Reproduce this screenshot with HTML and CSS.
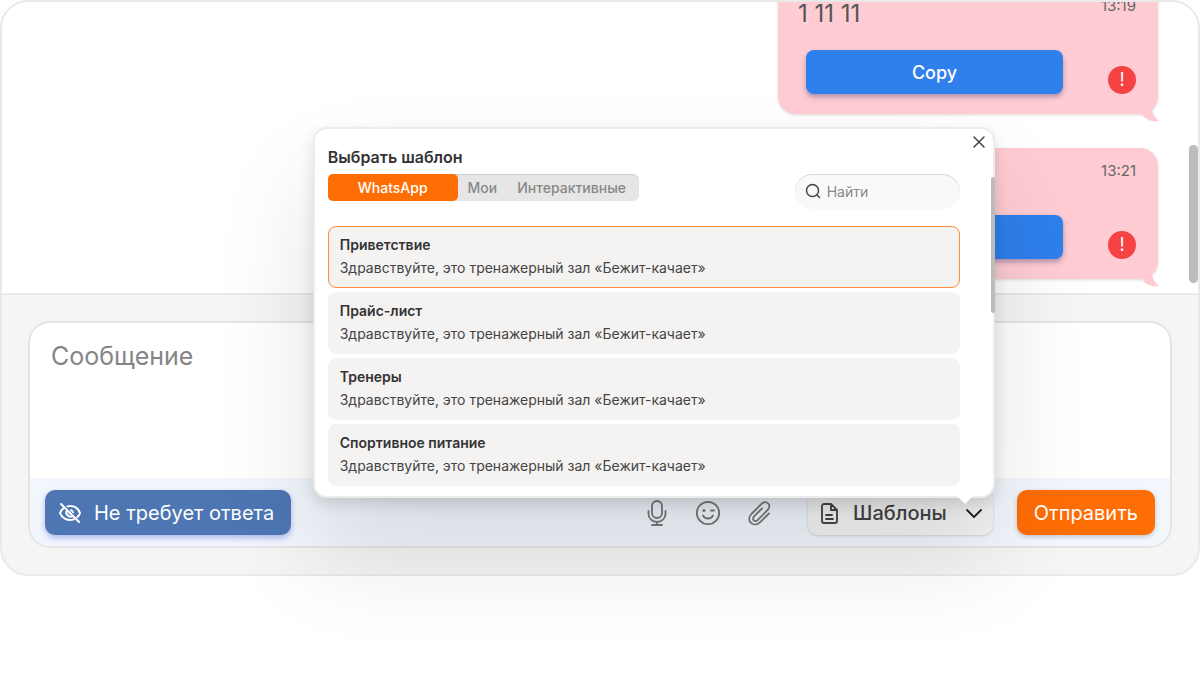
FILE: index.html
```html
<!DOCTYPE html>
<html lang="ru">
<head>
    <meta charset="UTF-8">
    <meta name="viewport" content="width=device-width, initial-scale=1.0">
    <title>Чат</title>
    <link rel="stylesheet" href="styles.css">
</head>
<body>
    <main class="chat">
        <section class="history">
            <article class="message">
                <div class="message-body">
                    <p>1 11 11</p>
                    <button class="copy-btn" type="button">Copy</button>
                </div>
                <div class="message-meta">
                    <time>13:19</time>
                    <span class="message-error">!</span>
                </div>
                <svg class="message-tail" viewBox="0 0 18 18"><path d="M10 0C11 8 13 13 18 17C11 18 4 16 0 9Z" fill="#ffccd3"/></svg>
            </article>
            <article class="message">
                <div class="message-body">
                    <p></p>
                    <button class="copy-btn" type="button">Copy</button>
                </div>
                <div class="message-meta">
                    <time>13:21</time>
                    <span class="message-error">!</span>
                </div>
                <svg class="message-tail" viewBox="0 0 18 18"><path d="M10 0C11 8 13 13 18 17C11 18 4 16 0 9Z" fill="#ffccd3"/></svg>
            </article>
            <div class="history-scroll"></div>
        </section>

        <form class="composer">
            <div class="composer-box">
                <textarea class="composer-input" placeholder="Сообщение" aria-label="Сообщение"></textarea>
                <div class="toolbar">
                    <button class="btn btn-blue" type="button">
                        <svg width="24" height="24" viewBox="0 0 24 24" fill="none" stroke="currentColor" stroke-width="2" stroke-linecap="round" stroke-linejoin="round">
                            <path d="M3 3l18 18"/>
                            <path d="M9.5 5.4C16 3.600 20.500 7.500 22 12c-.5 1.600-1.400 3-2.600 4.100"/>
                            <path d="M5.500 7.300C3.900 8.500 2.700 10.100 2 12c1.800 5 7.600 8.600 13.800 6.400"/>
                            <path d="M9 9.500a4 4 0 0 0 5.500 5.500"/>
                            <path d="M13 9.200a3 3 0 0 1 2 2"/>
                            <path d="M11.500 11.700l1 1"/>
                        </svg>
                        Не требует ответа
                    </button>

                    <div class="tools">
                        <button class="icon-btn" type="button" aria-label="Голосовое сообщение">
                            <svg width="26" height="26" viewBox="0 0 26 26" fill="none" stroke="currentColor" stroke-width="1.800" stroke-linecap="round">
                                <rect x="8" y="1" width="10" height="17" rx="5"/>
                                <path d="M4.500 11v3a8.500 8 0 0 0 17 0v-3M13 22v3M8 25h10"/>
                            </svg>
                        </button>
                        <button class="icon-btn" type="button" aria-label="Смайлы">
                            <svg width="26" height="26" viewBox="0 0 26 26" fill="none" stroke="currentColor" stroke-width="1.800" stroke-linecap="round">
                                <circle cx="13" cy="13" r="11.200"/>
                                <path d="M8 15.500c2 4 8 4 10 0M16 10.500h3"/>
                                <circle cx="9" cy="10.500" r="1.500" fill="currentColor" stroke="none"/>
                            </svg>
                        </button>
                        <button class="icon-btn" type="button" aria-label="Прикрепить файл">
                            <svg width="26" height="26" viewBox="0 0 26 26" fill="none" stroke="currentColor" stroke-width="1.800" stroke-linecap="round">
                                <path d="M23 13.500l-8.800 8.600C7.500 28.500-.8 20.500 5.400 14L15.200 4.200c5.200-5 11 .8 6.500 5.800l-9.800 9.800c-3.200 3-6.400-.4-3.800-3.400l8-8"/>
                            </svg>
                        </button>
                    </div>

                    <div class="templates">
                        <button class="btn btn-gray" type="button">
                            <svg width="24" height="24" viewBox="0 0 24 24" fill="none" stroke="currentColor" stroke-width="1.800" stroke-linecap="round" stroke-linejoin="round">
                                <path d="M13 3H6a2 2 0 0 0-2 2v15a2 2 0 0 0 2 2h11a2 2 0 0 0 2-2V9zM13 3v6h6M8 14h6M8 18h7"/>
                            </svg>
                            Шаблоны
                            <svg class="chevron" width="18" height="12" viewBox="0 0 18 12" fill="none" stroke="#222" stroke-width="1.800" stroke-linecap="round" stroke-linejoin="round">
                                <path d="M2 3l7 7 7-7"/>
                            </svg>
                        </button>

                        <div class="popup">
                            <button class="popup-close" type="button" aria-label="Закрыть">
                                <svg width="12" height="12" viewBox="0 0 12 12" stroke="#444" stroke-width="1.500" stroke-linecap="round"><path d="M1 1l10 10M11 1L1 11"/></svg>
                            </button>
                            <div class="popup-head">
                                <div>
                                    <h2>Выбрать шаблон</h2>
                                    <div class="tabs">
                                        <button class="tab active" type="button">WhatsApp</button>
                                        <button class="tab" type="button">Мои</button>
                                        <button class="tab" type="button">Интерактивные</button>
                                    </div>
                                </div>
                                <label class="search">
                                    <svg width="16" height="16" viewBox="0 0 16 16" fill="none" stroke="#444" stroke-width="1.500" stroke-linecap="round"><circle cx="7.500" cy="7.500" r="6"/><path d="M12 12l2.500 2.500"/></svg>
                                    <input type="text" placeholder="Найти" aria-label="Найти">
                                </label>
                            </div>
                            <ul class="template-list">
                                <li class="template selected">
                                    <h3>Приветствие</h3>
                                    <p>Здравствуйте, это тренажерный зал «Бежит-качает»</p>
                                </li>
                                <li class="template">
                                    <h3>Прайс-лист</h3>
                                    <p>Здравствуйте, это тренажерный зал «Бежит-качает»</p>
                                </li>
                                <li class="template">
                                    <h3>Тренеры</h3>
                                    <p>Здравствуйте, это тренажерный зал «Бежит-качает»</p>
                                </li>
                                <li class="template">
                                    <h3>Спортивное питание</h3>
                                    <p>Здравствуйте, это тренажерный зал «Бежит-качает»</p>
                                </li>
                            </ul>
                            <div class="popup-scroll"></div>
                        </div>
                    </div>

                    <button class="btn btn-orange" type="button">Отправить</button>
                </div>
            </div>
        </form>
    </main>
</body>
</html>
```
FILE: styles.css
```css
* {
    margin: 0;
    padding: 0;
    box-sizing: border-box;
}

body {
    min-height: 100vh;
    font-family: Inter, "Liberation Sans", sans-serif;
    background: #fff;
    color: #333;
}

button,
input,
textarea {
    font: inherit;
    color: inherit;
    border: none;
    background: none;
    outline: none;
}

button {
    cursor: pointer;
}

.chat {
    border: 2px solid #e9e9e9;
    border-radius: 28px;
    background: #f5f5f5;
}

/* Message history */

.history {
    position: relative;
    display: flex;
    flex-direction: column;
    justify-content: flex-end;
    align-items: flex-end;
    gap: 34px;
    height: 293px;
    padding: 0 40px 14px;
    border-bottom: 2px solid #e9e9e9;
    border-radius: 26px 26px 0 0;
    background: #fff;
    overflow: hidden;
}

.message {
    position: relative;
    flex: none;
    display: flex;
    justify-content: space-between;
    width: 380px;
    padding: 15px 22px 20px 28px;
    border-radius: 18px;
    background: #ffccd3;
    box-shadow: 0 1px 3px rgba(0, 0, 0, 0.15);
}

.message-body {
    width: 257px;
}

.message-body p {
    height: 32px;
    margin: 0 0 20px -8px;
    font-size: 24px;
    line-height: 32px;
    color: #555;
}

.copy-btn {
    display: block;
    width: 100%;
    height: 44px;
    border-radius: 8px;
    background: #2f80ed;
    color: #fff;
    font-size: 18px;
    font-weight: 500;
    box-shadow: 0 3px 5px rgba(60, 60, 120, 0.4);
}

.message-meta {
    display: flex;
    flex-direction: column;
    justify-content: space-between;
    align-items: flex-end;
}

.message-meta time {
    font-size: 15px;
    line-height: 16px;
    color: #666;
}

.message-error {
    width: 28px;
    height: 28px;
    border-radius: 50%;
    background: #f54242;
    color: #fff;
    font-size: 18px;
    line-height: 28px;
    text-align: center;
}

.message-tail {
    position: absolute;
    right: -1px;
    bottom: -8px;
    width: 18px;
    height: 18px;
}

.history-scroll {
    position: absolute;
    top: 143px;
    right: 0;
    width: 9px;
    height: 138px;
    border-radius: 5px;
    background: #bcbcbc;
}

/* Composer */

.composer {
    padding: 26px;
}

.composer-box {
    border: 2px solid #e4e4e4;
    border-radius: 22px;
    background: #fff;
}

.composer-input {
    display: block;
    width: 100%;
    height: 155px;
    padding: 17px 21px;
    font-size: 25px;
    line-height: 32px;
    resize: none;
}

.composer-input::placeholder {
    color: #858585;
}

.toolbar {
    display: flex;
    align-items: center;
    height: 68px;
    padding: 0 15px;
    border-radius: 0 0 20px 20px;
    background: #f2f7fe;
}

.btn {
    display: flex;
    align-items: center;
    height: 45px;
    padding: 1px 17px 0;
    border-radius: 10px;
    font-size: 20px;
    white-space: nowrap;
}

.btn-blue {
    gap: 12px;
    padding-left: 13px;
    background: #4d76b3;
    color: #fff;
    box-shadow: 0 3px 6px rgba(70, 90, 200, 0.4);
}

.btn-orange {
    margin-left: 24px;
    background: #ff6d05;
    color: #fff;
    box-shadow: 0 2px 5px rgba(0, 0, 0, 0.2);
}

.btn-gray {
    padding: 1px 10px 0;
    background: #f4f4f4;
    color: #444;
    font-weight: 500;
    box-shadow: 0 1px 3px rgba(0, 0, 0, 0.15);
}

.btn-gray svg:first-child {
    margin-right: 11px;
}

.btn-gray .chevron {
    margin-left: 18px;
}

.tools {
    display: flex;
    gap: 25px;
    margin: 2px 36px 0 auto;
}

.icon-btn {
    height: 26px;
    color: #777;
}

.icon-btn svg {
    display: block;
}

/* Template picker */

.templates {
    position: relative;
}

.popup {
    position: absolute;
    right: -2px;
    bottom: 37px;
    width: 682px;
    padding: 18px 33px 10px 13px;
    border: 2px solid #ececec;
    border-radius: 14px;
    background: #fff;
    box-shadow: 0 6px 14px rgba(0, 0, 0, 0.12), 0 56px 100px rgba(0, 0, 0, 0.12);
}

.popup::after {
    content: "";
    position: absolute;
    right: 20px;
    bottom: -8px;
    border: 8px solid transparent;
    border-top-color: #fff;
    border-bottom: none;
}

.popup-close {
    position: absolute;
    top: 7px;
    right: 8px;
    width: 12px;
    height: 12px;
}

.popup-close svg {
    display: block;
}

.popup-head {
    display: flex;
    justify-content: space-between;
    align-items: flex-end;
    height: 62px;
}

.popup-head h2 {
    font-size: 16px;
    line-height: 20px;
    font-weight: 600;
}

.popup-head > div {
    height: 62px;
}

.tabs {
    display: flex;
    height: 27px;
    margin-top: 7px;
    border-radius: 6px;
    background: #e6e6e6;
    box-shadow: inset 0 1px 1px rgba(0, 0, 0, 0.1);
}

.tab {
    padding: 0 10px;
    border-radius: 5px;
    font-size: 14px;
    font-weight: 500;
    color: #888;
}

.tab:last-child {
    padding-right: 13px;
}

.tab.active {
    padding: 0 30px;
    background: #ff6d05;
    color: #fff;
}

.search {
    display: flex;
    align-items: center;
    gap: 6px;
    width: 165px;
    height: 35px;
    padding: 0 10px;
    border-radius: 18px;
    background: #f9f9f9;
    box-shadow: inset 0 1px 1px rgba(0, 0, 0, 0.14);
}

.search svg {
    flex: none;
}

.search input {
    width: 100%;
    font-size: 14px;
}

.search input::placeholder {
    color: #888;
}

.template-list {
    display: flex;
    flex-direction: column;
    gap: 4px;
    margin-top: 17px;
    list-style: none;
}

.template {
    height: 62px;
    padding: 8px 11px;
    border: 1px solid transparent;
    border-radius: 8px;
    background: #f4f3f2;
}

.template.selected {
    border-color: #ff8a3c;
}

.template h3 {
    margin-bottom: 3px;
    font-size: 14px;
    line-height: 20px;
    font-weight: 600;
}

.template p {
    font-size: 14px;
    line-height: 20px;
    color: #444;
}

.popup-scroll {
    position: absolute;
    top: 48px;
    right: -2px;
    width: 4px;
    height: 136px;
    border-radius: 2px;
    background: #bcbcbc;
}
```
